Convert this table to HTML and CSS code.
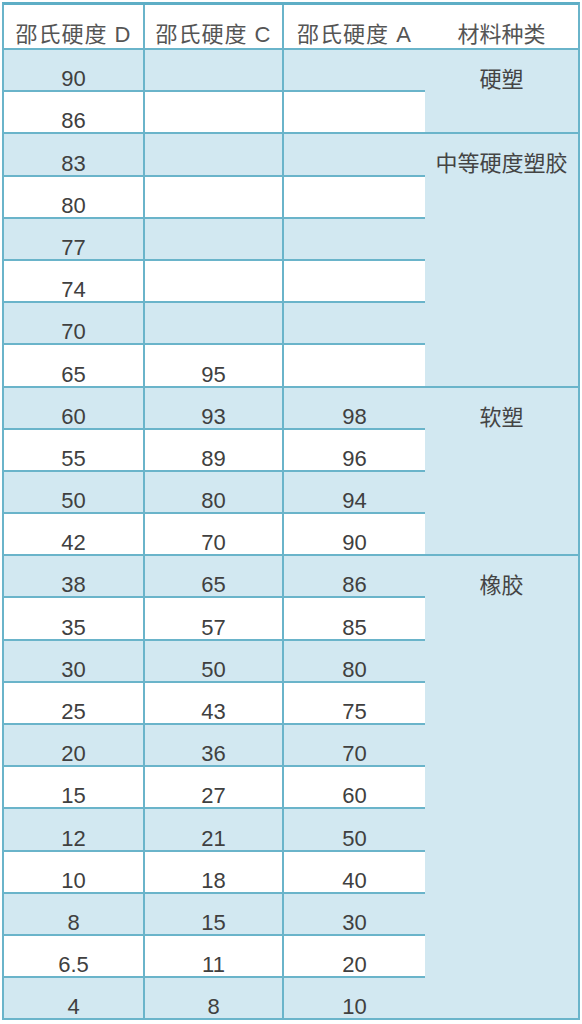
FILE: index.html
```html
<!DOCTYPE html>
<html lang="zh">
<head>
<meta charset="utf-8">
<title>邵氏硬度对照表</title>
<link rel="stylesheet" href="styles.css">
</head>
<body>
<table class="hardness">
  <colgroup>
    <col class="c1"><col class="c2"><col class="c3"><col class="c4">
  </colgroup>
  <thead>
    <tr class="head">
      <th>邵氏硬度 D</th><th>邵氏硬度 C</th><th class="nr">邵氏硬度 A</th><th>材料种类</th>
    </tr>
  </thead>
  <tbody>
    <tr class="shade"><td>90</td><td></td><td class="nr"></td><td class="mat" rowspan="2">硬塑</td></tr>
    <tr class="plain"><td>86</td><td></td><td class="nr"></td></tr>
    <tr class="shade"><td>83</td><td></td><td class="nr"></td><td class="mat" rowspan="6">中等硬度塑胶</td></tr>
    <tr class="plain"><td>80</td><td></td><td class="nr"></td></tr>
    <tr class="shade"><td>77</td><td></td><td class="nr"></td></tr>
    <tr class="plain"><td>74</td><td></td><td class="nr"></td></tr>
    <tr class="shade"><td>70</td><td></td><td class="nr"></td></tr>
    <tr class="plain"><td>65</td><td>95</td><td class="nr"></td></tr>
    <tr class="shade"><td>60</td><td>93</td><td class="nr">98</td><td class="mat" rowspan="4">软塑</td></tr>
    <tr class="plain"><td>55</td><td>89</td><td class="nr">96</td></tr>
    <tr class="shade"><td>50</td><td>80</td><td class="nr">94</td></tr>
    <tr class="plain"><td>42</td><td>70</td><td class="nr">90</td></tr>
    <tr class="shade"><td>38</td><td>65</td><td class="nr">86</td><td class="mat" rowspan="11">橡胶</td></tr>
    <tr class="plain"><td>35</td><td>57</td><td class="nr">85</td></tr>
    <tr class="shade"><td>30</td><td>50</td><td class="nr">80</td></tr>
    <tr class="plain"><td>25</td><td>43</td><td class="nr">75</td></tr>
    <tr class="shade"><td>20</td><td>36</td><td class="nr">70</td></tr>
    <tr class="plain"><td>15</td><td>27</td><td class="nr">60</td></tr>
    <tr class="shade"><td>12</td><td>21</td><td class="nr">50</td></tr>
    <tr class="plain"><td>10</td><td>18</td><td class="nr">40</td></tr>
    <tr class="shade"><td>8</td><td>15</td><td class="nr">30</td></tr>
    <tr class="plain"><td>6.5</td><td>11</td><td class="nr">20</td></tr>
    <tr class="shade"><td>4</td><td>8</td><td class="nr">10</td></tr>
  </tbody>
</table>
</body>
</html>
```

FILE: styles.css
```css
html, body {
  margin: 0;
  padding: 0;
  background: #ffffff;
}

body {
  padding: 2px 0 0 2px;
}

.hardness {
  border-collapse: separate;
  border-spacing: 0;
  table-layout: fixed;
  width: 578px;
  border-top: 3px solid #5eaec6;
  border-left: 2px solid #6ab4ca;
  border-right: 2px solid #6ab4ca;
  font-family: "Liberation Sans", "Noto Sans CJK SC", sans-serif;
  font-size: 22px;
  line-height: 22px;
  color: #404040;
}

.c1 { width: 141px; }
.c2 { width: 139px; }
.c3 { width: 141px; }
.c4 { width: 153px; }

.hardness th,
.hardness td {
  box-sizing: border-box;
  padding: 0;
  text-align: center;
  vertical-align: bottom;
  border-bottom: 2px solid #6ab4ca;
  border-right: 2px solid #6ab4ca;
  white-space: nowrap;
}

.hardness th {
  height: 45px;
  padding-bottom: 2px;
  font-weight: normal;
  color: #555555;
  background: #ffffff;
  letter-spacing: 1px;
}

.hardness td {
  height: 42.2px;
}

.hardness .nr {
  border-right: none;
}

.hardness th:last-child {
  border-right: none;
  letter-spacing: 0;
}

.shade td {
  background: #d2e8f1;
}

.plain td {
  background: #ffffff;
}

.hardness td.mat {
  background: #d2e8f1;
  border-right: none;
  vertical-align: top;
  padding-top: 19px;
  color: #444444;
}
```
